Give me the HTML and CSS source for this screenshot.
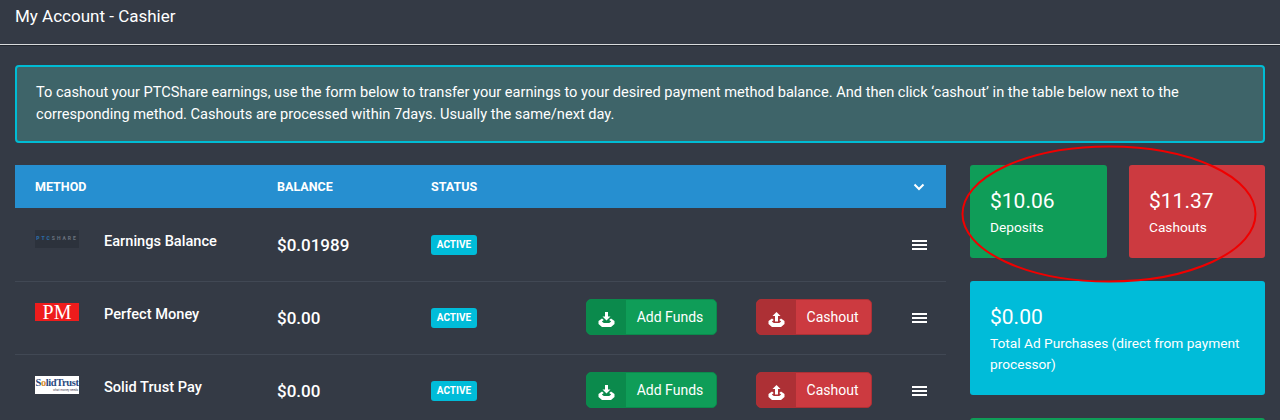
FILE: index.html
```html
<!DOCTYPE html>
<html lang="en">
<head>
<meta charset="utf-8">
<title>My Account - Cashier</title>
<link rel="stylesheet" href="styles.css">
</head>
<body>
<header class="top"><h1 class="title">My Account - Cashier</h1></header>
<main class="content">
  <div class="alert">To cashout your PTCShare earnings, use the form below to transfer your earnings to your desired payment method balance. And then click ‘cashout’ in the table below next to the corresponding method. Cashouts are processed within 7days. Usually the same/next day.</div>
  <div class="columns">
    <section class="table">
      <div class="row head">
        <span class="th c-method">METHOD</span>
        <span class="th">BALANCE</span>
        <span class="th">STATUS</span>
        <span></span><span></span>
        <svg class="chev" viewBox="0 0 12 8"><path d="M1.500 1.500 6 6l4.500-4.500" fill="none" stroke="#fff" stroke-width="2"/></svg>
      </div>
      <div class="row body">
        <div class="logo logo-ptc"><b>PTC</b>SHARE</div>
        <div class="name">Earnings Balance</div>
        <div class="bal">$0.01989</div>
        <div><span class="badge">ACTIVE</span></div>
        <span></span><span></span>
        <div class="menu"><i></i><i></i><i></i></div>
      </div>
      <div class="row body">
        <div class="logo logo-pm">PM</div>
        <div class="name">Perfect Money</div>
        <div class="bal">$0.00</div>
        <div><span class="badge">ACTIVE</span></div>
        <a class="btn btn-add"><span class="btn-ic"><svg viewBox="0 0 17 15"><path fill="#fff" d="M7 0h3v4.500h2.500L8.500 8.500l-4-4H7zM4 6.500.5 9v3L4 15h9l3.500-3V9L13 6.500l-1.800 1.600 2 1.400-2 1.500H5.800l-2-1.500 2-1.400z"/></svg></span><span class="btn-t">Add Funds</span></a>
        <a class="btn btn-out"><span class="btn-ic"><svg viewBox="0 0 17 15"><path fill="#fff" d="M8.500 0l4 4H10v5.500H7V4H4.500zM4 6.500.5 9v3L4 15h9l3.500-3V9L13 6.500l-1.800 1.600 2 1.400-2 1.500H5.800l-2-1.500 2-1.400z"/></svg></span><span class="btn-t">Cashout</span></a>
        <div class="menu"><i></i><i></i><i></i></div>
      </div>
      <div class="row body">
        <div class="logo logo-st"><span class="st-top">S<em>o</em>lidTrust</span><span class="st-sub">what money needs</span></div>
        <div class="name">Solid Trust Pay</div>
        <div class="bal">$0.00</div>
        <div><span class="badge">ACTIVE</span></div>
        <a class="btn btn-add"><span class="btn-ic"><svg viewBox="0 0 17 15"><path fill="#fff" d="M7 0h3v4.500h2.500L8.500 8.500l-4-4H7zM4 6.500.5 9v3L4 15h9l3.500-3V9L13 6.500l-1.800 1.600 2 1.400-2 1.500H5.800l-2-1.500 2-1.400z"/></svg></span><span class="btn-t">Add Funds</span></a>
        <a class="btn btn-out"><span class="btn-ic"><svg viewBox="0 0 17 15"><path fill="#fff" d="M8.500 0l4 4H10v5.500H7V4H4.500zM4 6.500.5 9v3L4 15h9l3.500-3V9L13 6.500l-1.800 1.600 2 1.400-2 1.500H5.800l-2-1.500 2-1.400z"/></svg></span><span class="btn-t">Cashout</span></a>
        <div class="menu"><i></i><i></i><i></i></div>
      </div>
    </section>
    <aside class="side">
      <div class="card green"><div class="amt">$10.06</div><div class="lbl">Deposits</div></div>
      <div class="card red"><div class="amt">$11.37</div><div class="lbl">Cashouts</div></div>
      <div class="card cyan wide"><div class="amt">$0.00</div><div class="lbl">Total Ad Purchases (direct from payment processor)</div></div>
      <div class="card green wide"></div>
    </aside>
  </div>
</main>
<svg class="ring" viewBox="0 0 300 140"><ellipse cx="150" cy="70" rx="146.500" ry="67.500" fill="none" stroke="#f00000" stroke-width="2"/></svg>
</body>
</html>
```
FILE: styles.css
```css
* { box-sizing: border-box; }
html, body { margin: 0; height: 420px; overflow: hidden; }
body { position: relative; background: #343a45; color: #fff; font-family: Roboto, "Liberation Sans", sans-serif; font-size: 14px; }
.top { height: 46px; padding: 7px 15px 0; border-bottom: 1px solid #20252d; box-shadow: inset 0 -1px 0 #d8dadc; }
.title { margin: 0; font-size: 17px; line-height: 19px; font-weight: 400; }
.content { padding: 19px 15px 0; }
.alert { height: 78px; padding: 14px 19px; border: 2px solid #00bcd4; border-radius: 4px; background: #3e6469; line-height: 22px; font-size: 14.6px; }
.columns { display: flex; gap: 24px; margin-top: 22px; align-items: flex-start; }
.table { width: 931px; flex: none; }
.row { display: grid; grid-template-columns: 69px 173px 154px 155px 170px 156px 15px; padding-left: 20px; align-items: center; }
.head { height: 43px; background: #268fd0; margin-bottom: 1px; }
.th { font-size: 12.500px; font-weight: 700; }
.c-method { grid-column: span 2; }
.head .th:nth-child(2) { grid-column: 3; }
.chev { width: 12px; height: 8px; margin: 0 0 0 1px; }
.body { height: 73px; border-bottom: 1px solid #414854; }
.logo { width: 44px; height: 18px; margin-top: -12px; }
.logo-ptc { background: #2c323c; color: #6c7480; font-size: 5px; letter-spacing: 2px; line-height: 17px; text-align: center; font-weight: 700; white-space: nowrap; }
.logo-ptc b { color: #2c6ca8; }
.logo-pm { background: #ee1c1c; font-family: "Liberation Serif", serif; font-size: 20px; line-height: 18px; text-align: center; }
.logo-st { background: #fff; display: flex; flex-direction: column; align-items: center; }
.st-top { font-family: "Liberation Serif", serif; font-weight: 700; font-size: 10.500px; line-height: 11px; margin-top: 1px; letter-spacing: -0.400px; color: #2a4a80; white-space: nowrap; }
.st-top em { font-style: normal; color: #d9902f; }
.st-sub { font-size: 3px; line-height: 4px; color: #445; white-space: nowrap; align-self: flex-end; margin-right: 1px; }
.name { font-size: 14.600px; font-weight: 500; margin-top: -8px; }
.bal { font-size: 17px; font-weight: 500; }
.badge { display: inline-block; width: 46px; height: 20px; border-radius: 3px; background: #00bcd9; font-size: 10px; font-weight: 700; line-height: 20px; text-align: center; }
.btn { display: flex; height: 36px; border-radius: 5px; border: 1px solid; line-height: 34px; font-size: 14px; overflow: hidden; margin-top: -2px; }
.btn-ic { width: 39px; flex: none; display: flex; align-items: center; justify-content: center; }
.btn-ic svg { width: 17px; height: 15px; margin-top: 5px; }
.btn-t { flex: 1; text-align: center; }
.btn-add { width: 131px; background: #0f9d58; border-color: #0b8a4c; }
.btn-add .btn-ic { background: #0b8a4c; }
.btn-add .btn-t { padding-right: 2px; }
.btn-out { width: 116px; background: #cc3a40; border-color: #ad3035; }
.btn-out .btn-ic { background: #ad3035; }
.btn-out .btn-t { padding-right: 2px; }
.menu { display: flex; flex-direction: column; gap: 2px; width: 15px; }
.menu i { display: block; height: 2px; background: #fff; }
.side { flex: 1; margin-right: 0; display: grid; grid-template-columns: 137px 136px; column-gap: 22px; row-gap: 23px; width: 295px; }
.card { border-radius: 3px; padding: 21px 20px; height: 93px; }
.wide { grid-column: span 2; height: 114px; }
.green { background: #0f9d58; }
.red { background: #cc3a40; }
.cyan { background: #00bcd9; }
.amt { font-size: 21px; line-height: 31px; }
.lbl { font-size: 13.700px; line-height: 21px; }
.ring { position: absolute; left: 959px; top: 144px; width: 300px; height: 140px; }
```
